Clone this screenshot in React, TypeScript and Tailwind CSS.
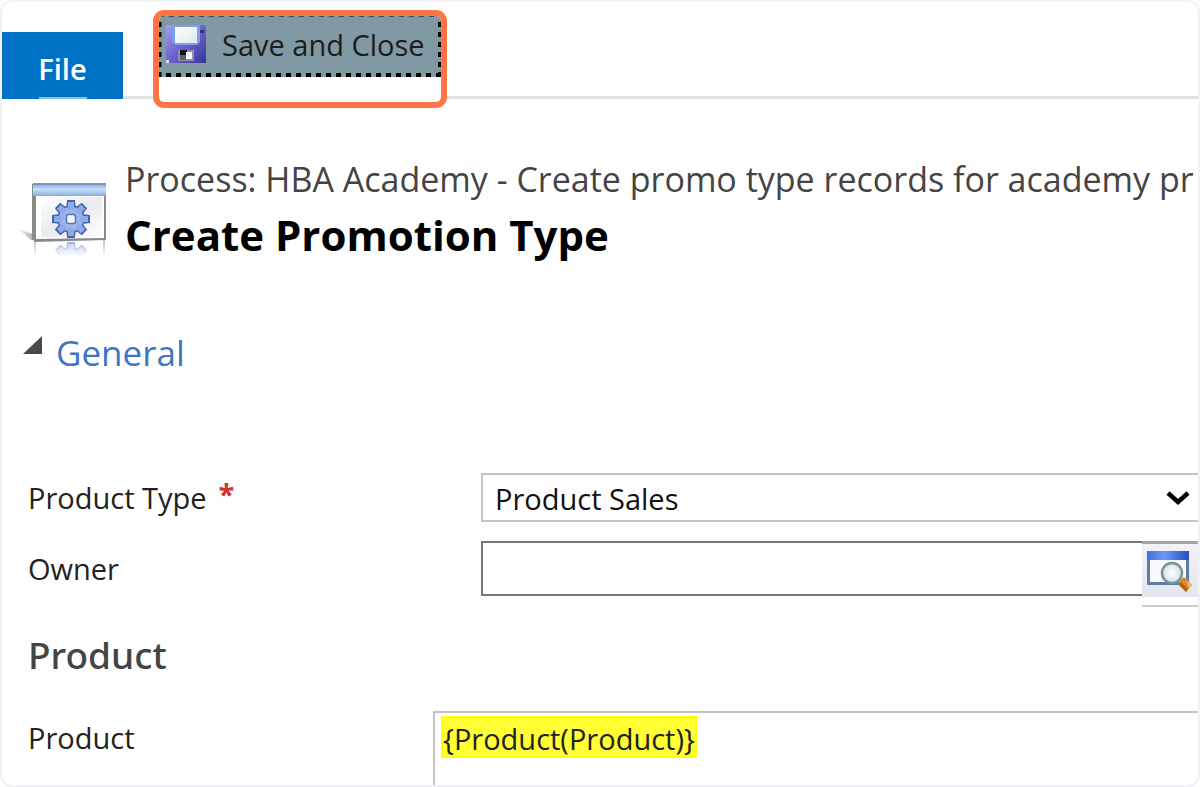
import type { ReactNode } from "react";

function FloppyIcon() {
  return (
    <svg viewBox="0 0 40 40" className="h-10 w-10 shrink-0" aria-hidden="true">
      <defs>
        <linearGradient id="floppyBody" x1="0" y1="0" x2="1" y2="1">
          <stop offset="0" stopColor="#a3a0f2" />
          <stop offset="0.5" stopColor="#6a62cf" />
          <stop offset="1" stopColor="#38349a" />
        </linearGradient>
        <linearGradient id="floppyLabel" x1="0" y1="0" x2="1" y2="1">
          <stop offset="0" stopColor="#ffffff" />
          <stop offset="1" stopColor="#dfe8ee" />
        </linearGradient>
      </defs>
      <path d="M0 0H39L40 3V38H3L0 36Z" fill="url(#floppyBody)" />
      <path d="M6 0H34V15Q34 20 29 20H11Q6 20 6 15Z" fill="#7fa0e6" />
      <path d="M9 2H31V18H9Z" fill="url(#floppyLabel)" />
      <path d="M34 5H38V8H34Z" fill="#35307f" />
      <path d="M12 25H28V36H12Z" fill="#8d93a6" />
      <path d="M14 25H21V30H14Z" fill="#15151d" />
      <path d="M20 27H26V34H20Z" fill="#f4f6f6" />
      <path d="M14 30H20V35H14Z" fill="#5c6070" />
      <path d="M0 35H3V38H0Z" fill="#d9d9fb" />
    </svg>
  );
}

const TEETH = [0, 45, 90, 135, 180, 225, 270, 315];

function Gear() {
  return (
    <g>
      {TEETH.map((angle) => (
        <path
          key={angle}
          d="M-4 -10L-3 -18H3L4 -10Z"
          transform={`rotate(${angle})`}
          fill="#7f9fe0"
          stroke="#4663ad"
          strokeWidth="2"
        />
      ))}
      <circle r="13" fill="#9db5ea" stroke="#4a68b3" strokeWidth="1.5" />
      {TEETH.map((angle) => (
        <path key={angle} d="M-3 -9V-17H3V-9Z" transform={`rotate(${angle})`} fill="#8eabe8" />
      ))}
      <rect x="-4.5" y="-4.5" width="9" height="9" rx="2" fill="#f4f5fa" stroke="#5471bb" strokeWidth="1.5" />
    </g>
  );
}

function ProcessIcon() {
  return (
    <svg viewBox="0 0 90 80" className="h-20 w-[90px] shrink-0" aria-hidden="true">
      <defs>
        <linearGradient id="titleBar" x1="0" y1="0" x2="0" y2="1">
          <stop offset="0" stopColor="#84a9d8" />
          <stop offset="0.45" stopColor="#c9e0fb" />
          <stop offset="1" stopColor="#86aedd" />
        </linearGradient>
        <linearGradient id="pane" x1="0" y1="0" x2="1" y2="1">
          <stop offset="0" stopColor="#ffffff" />
          <stop offset="0.5" stopColor="#e9ebf0" />
          <stop offset="1" stopColor="#ffffff" />
        </linearGradient>
        <linearGradient id="fade" x1="0" y1="0" x2="0" y2="1">
          <stop offset="0" stopColor="#ffffff" stopOpacity="0.4" />
          <stop offset="1" stopColor="#ffffff" stopOpacity="1" />
        </linearGradient>
        <linearGradient id="shadow" x1="0" y1="0" x2="1" y2="0">
          <stop offset="0" stopColor="#d8dad8" stopOpacity="0.3" />
          <stop offset="1" stopColor="#a8aca8" />
        </linearGradient>
        <clipPath id="reflection">
          <rect x="12" y="61" width="78" height="17" />
        </clipPath>
      </defs>
      <path d="M0 50L15 55V61H13Z" fill="url(#shadow)" />
      <g clipPath="url(#reflection)">
        <path d="M17 61V78M86 61V78" stroke="#9aa09c" strokeWidth="2" />
        <g transform="translate(53 82) scale(1 -1)">
          <Gear />
        </g>
        <rect x="12" y="61" width="78" height="17" fill="url(#fade)" />
      </g>
      <path d="M14 5H88V61L17 63L14 60Z" fill="#858d88" />
      <path d="M18 16H86V59L18 60Z" fill="#ffffff" />
      <path d="M23 18H84V57L23 58Z" fill="url(#pane)" />
      <path d="M15 5H88V17H15Z" fill="url(#titleBar)" />
      <path d="M15 5H88" stroke="#7898c4" strokeWidth="2" />
      <g transform="translate(53 40)">
        <Gear />
      </g>
    </svg>
  );
}

function LookupIcon() {
  return (
    <svg viewBox="0 0 48 44" className="h-11 w-12" aria-hidden="true">
      <defs>
        <linearGradient id="lookupBar" x1="0" y1="0" x2="1" y2="0">
          <stop offset="0" stopColor="#3f6fdc" />
          <stop offset="0.4" stopColor="#6b9bf5" />
          <stop offset="1" stopColor="#2450c0" />
        </linearGradient>
        <radialGradient id="lens">
          <stop offset="0" stopColor="#ffffff" />
          <stop offset="1" stopColor="#cfe2f4" />
        </radialGradient>
      </defs>
      <rect x="1" y="2" width="42" height="34" rx="1" fill="#5d7ca8" />
      <rect x="4" y="11" width="36" height="22" fill="#f8fafe" />
      <rect x="1" y="2" width="42" height="9" fill="url(#lookupBar)" />
      <path d="M34 31L38 28L46 36L40 43L33 36Z" fill="#d98a2b" />
      <path d="M40 31L46 36L43 39Z" fill="#f0b565" />
      <path d="M33 36L40 43L42 40L35 33Z" fill="#a8641c" />
      <circle cx="26" cy="24" r="10" fill="url(#lens)" stroke="#7d948c" strokeWidth="2.5" />
    </svg>
  );
}

function Label({ htmlFor, children }: { htmlFor: string; children: ReactNode }) {
  return (
    <label htmlFor={htmlFor} className="text-[29px] leading-10 text-[#222]">
      {children}
    </label>
  );
}

export default function App() {
  return (
    <div className="min-h-screen bg-white font-['Open_Sans','Noto_Sans',sans-serif] text-black">
      <div className="flex min-h-screen flex-col overflow-hidden rounded-xl border-2 border-[#f1f1f7]">
        <header className="flex h-[97px] items-start border-b-3 border-[#e0e0e0]">
          <button
            type="button"
            className="mt-[30px] flex h-[67px] w-[121px] shrink-0 flex-col items-center justify-end bg-[#0072c6] text-[29px] leading-10 font-semibold text-white"
          >
            <span className="mb-2">File</span>
            <span className="h-[2px] w-12 bg-[#8fc0e6]" />
          </button>
          <div className="z-10 mt-2 ml-[30px] h-[98px] w-[294px] shrink-0 overflow-hidden rounded-[11px] border-6 border-[#ff7442] bg-white">
            <button
              type="button"
              className="relative flex h-[61px] w-full items-center gap-4 bg-[#8099a3] pb-1 pl-[7px] text-[29px] leading-10 whitespace-nowrap text-[#1c1c1c]"
            >
              <svg className="absolute inset-0 h-full w-full" aria-hidden="true">
                <line x1="0" y1="0" x2="100%" y2="0" stroke="#3d494e" strokeWidth="2" strokeDasharray="5 5" />
                <line x1="1" y1="6" x2="1" y2="100%" stroke="#000" strokeWidth="3" strokeDasharray="5 5" />
                <line x1="281" y1="6" x2="281" y2="100%" stroke="#000" strokeWidth="4" strokeDasharray="5 5" />
                <line x1="7" y1="59" x2="100%" y2="59" stroke="#000" strokeWidth="4" strokeDasharray="5 5" />
              </svg>
              <FloppyIcon />
              <span>Save and Close</span>
            </button>
          </div>
        </header>

        <section className="mt-14 flex pl-4">
          <div className="mt-6">
            <ProcessIcon />
          </div>
          <div className="ml-[17px] min-w-0 flex-1 overflow-hidden whitespace-nowrap">
            <p className="text-[34px] leading-[48px] text-[#444]">
              Process: HBA Academy - Create promo type records for academy pr
            </p>
            <h1 className="text-[42px] leading-[64px] font-bold">Create Promotion Type</h1>
          </div>
        </section>

        <h2 className="mt-[60px] ml-5 flex gap-3 text-[35px] leading-[52px] text-[#3f76c2]">
          <svg viewBox="0 0 22 20" className="mt-2 h-5 w-[22px]" aria-hidden="true">
            <path d="M1 19L20 1V19Z" fill="#4a4a4a" />
          </svg>
          General
        </h2>

        <div className="mt-[94px] grid grid-cols-[453px_1fr] gap-y-[19px] pl-[26px]">
          <div className="flex items-center gap-3">
            <Label htmlFor="product-type">Product Type</Label>
            <span className="h-12 text-[29px] leading-10 font-bold text-[#d03030]">*</span>
          </div>
          <div className="relative">
            <select
              id="product-type"
              className="h-[49px] w-full appearance-none border-y-2 border-l-2 border-[#c4c4c4] bg-white pt-0.5 pl-3 text-[29px] text-[#111]"
            >
              <option>Product Sales</option>
            </select>
            <svg
              viewBox="0 0 24 16"
              className="pointer-events-none absolute top-[17px] right-2 h-4 w-6"
              aria-hidden="true"
            >
              <path d="M2 3L12 12L22 3" fill="none" stroke="#000" strokeWidth="4.5" />
            </svg>
          </div>

          <Label htmlFor="owner">
            <span className="block pt-2">Owner</span>
          </Label>
          <div className="flex items-start">
            <input
              id="owner"
              className="h-[55px] min-w-0 flex-1 border-y-2 border-l-2 border-[#777] px-3 text-[29px]"
            />
            <div className="w-14 shrink-0 border-b-2 border-[#cccccc] pb-2">
              <button
                type="button"
                aria-label="Look up owner"
                className="flex h-14 w-full items-center justify-center border-t-3 border-[#a4a4aa] bg-linear-to-b from-[#f2f2f7] to-[#e4e5ee]"
              >
                <LookupIcon />
              </button>
            </div>
          </div>
        </div>

        <h2 className="mt-6 pl-[26px] font-['Noto_Sans','Open_Sans',sans-serif] text-[37px] leading-[48px] font-medium text-[#444]">
          Product
        </h2>

        <div className="mt-8 flex flex-1 pl-[26px]">
          <div className="w-[405px] shrink-0 pt-[7px]">
            <Label htmlFor="product">Product</Label>
          </div>
          <div className="flex-1 border-t-2 border-l-2 border-[#c4c4c4] pt-[3px] pl-1.5">
            <input
              id="product"
              defaultValue="{Product(Product)}"
              className="block h-[42px] w-64 border-2 border-[#ffff00] bg-[#ffff33] pt-1 text-[29px] text-[#222]"
            />
          </div>
        </div>
      </div>
    </div>
  );
}
